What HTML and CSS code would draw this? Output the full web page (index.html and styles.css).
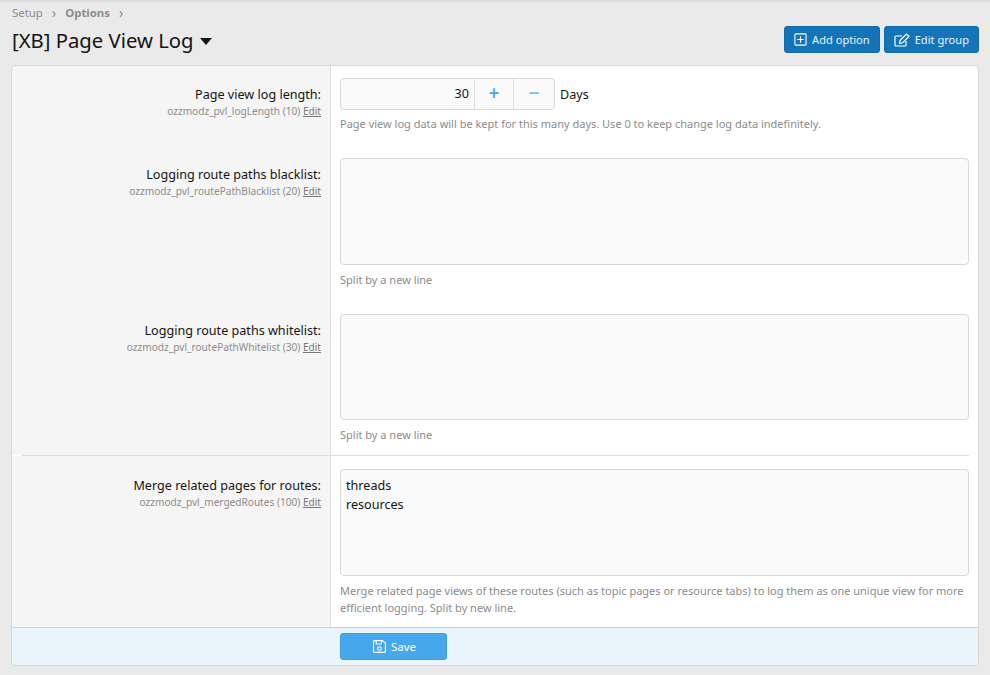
FILE: index.html
```html
<!DOCTYPE html>
<html lang="en">

<head>
    <meta charset="UTF-8">
    <title>[XB] Page View Log</title>
    <link rel="stylesheet" href="styles.css">
</head>

<body>
    <div class="crumbs">
        <span>Setup</span><span class="sep">&#8250;</span><b>Options</b><span class="sep">&#8250;</span>
    </div>

    <header class="head">
        <h1>[XB] Page View Log <span class="caret"></span></h1>
        <div class="head-btns">
            <a class="btn">
                <svg width="13" height="13" viewBox="0 0 14 14" fill="none" stroke="#fff" stroke-width="1.2">
                    <rect x="1" y="1" width="12" height="12" rx="1"/>
                    <path d="M7 3.5v7M3.5 7h7"/>
                </svg>
                Add option
            </a>
            <a class="btn">
                <svg width="16" height="14" viewBox="0 0 16 14" fill="none" stroke="#fff" stroke-width="1.2">
                    <path d="M12 8v4a1 1 0 0 1-1 1H2a1 1 0 0 1-1-1V4a1 1 0 0 1 1-1h6"/>
                    <path d="M6 7.5 12.5 1 15 3.2 8.6 9.8 5.6 10.4z"/>
                </svg>
                Edit group
            </a>
        </div>
    </header>

    <form class="card">
        <div class="row row-1">
            <div class="label">
                <div class="name">Page view log length:</div>
                <div class="hint">ozzmodz_pvl_logLength (10) <u>Edit</u></div>
            </div>
            <div class="field">
                <div class="spin-line">
                    <div class="spin">
                        <div class="spin-val">30</div>
                        <div class="spin-btn">+</div>
                        <div class="spin-btn spin-minus">&minus;</div>
                    </div>
                    <span>Days</span>
                </div>
                <p class="explain">Page view log data will be kept for this many days. Use 0 to keep change log data indefinitely.</p>
            </div>
        </div>

        <div class="row row-2">
            <div class="label">
                <div class="name">Logging route paths blacklist:</div>
                <div class="hint">ozzmodz_pvl_routePathBlacklist (20) <u>Edit</u></div>
            </div>
            <div class="field">
                <div class="area"></div>
                <p class="explain">Split by a new line</p>
            </div>
        </div>

        <div class="row row-3">
            <div class="label">
                <div class="name">Logging route paths whitelist:</div>
                <div class="hint">ozzmodz_pvl_routePathWhitelist (30) <u>Edit</u></div>
            </div>
            <div class="field">
                <div class="area"></div>
                <p class="explain">Split by a new line</p>
            </div>
        </div>

        <div class="row row-4">
            <div class="label">
                <div class="name">Merge related pages for routes:</div>
                <div class="hint">ozzmodz_pvl_mergedRoutes (100) <u>Edit</u></div>
            </div>
            <div class="field">
                <div class="area">threads<br>resources</div>
                <p class="explain">Merge related page views of these routes (such as topic pages or resource tabs) to log them as one unique view for more efficient logging. Split by new line.</p>
            </div>
        </div>

        <div class="foot">
            <button class="save" type="button">
                <svg width="13" height="13" viewBox="0 0 13 13" fill="none" stroke="#fff" stroke-width="1.1">
                    <path d="M1.5.6h8l2.9 2.6v8.2a1 1 0 0 1-1 1H1.5a1 1 0 0 1-1-1V1.6a1 1 0 0 1 1-1z"/>
                    <path d="M3.2.8v3.2h5.2V.8"/>
                    <circle cx="6.5" cy="8.6" r="1.9"/>
                </svg>
                Save
            </button>
        </div>
    </form>
</body>

</html>
```

FILE: styles.css
```css
* {
    box-sizing: border-box;
}

html,
body {
    height: 100%;
}

body {
    margin: 0;
    padding: 0 11px;
    background: #eaeaea;
    box-shadow: inset 0 4px 3px -3px #d4d4d4;
    font-family: "Noto Sans", "Open Sans", sans-serif;
    font-size: 12.6px;
    color: #141414;
    overflow: hidden;
}

.crumbs {
    height: 26px;
    padding: 5px 0 0 1px;
    font-size: 11.4px;
    line-height: 16px;
    color: #8c8c8c;
    display: flex;
}

.crumbs .sep {
    margin: 0 9px;
    font-size: 14px;
    line-height: 15px;
}

.head {
    height: 39px;
    padding-left: 1px;
    display: flex;
    justify-content: space-between;
    align-items: flex-start;
}

h1 {
    margin: 0;
    font-size: 20.3px;
    font-weight: 400;
    line-height: 28px;
}

.caret {
    display: inline-block;
    margin-left: 1px;
    vertical-align: 3px;
    border-top: 7px solid #141414;
    border-left: 6.5px solid transparent;
    border-right: 6.5px solid transparent;
}

.head-btns {
    display: flex;
    gap: 4px;
}

.btn {
    height: 27px;
    padding: 0 9px;
    display: flex;
    align-items: center;
    gap: 5px;
    background: #1474b8;
    border: 1px solid #126aa8;
    border-radius: 3px;
    color: #e8f4fc;
    font-size: 11.1px;
    white-space: nowrap;
}

.card {
    width: 968px;
    height: 601px;
    display: flex;
    flex-direction: column;
    background: linear-gradient(to right, #f5f5f5 318px, #e0e0e0 318px, #e0e0e0 319px, #fff 319px);
    border: 1px solid #d8d8d8;
    border-radius: 4px;
}

.row {
    display: flex;
    padding-top: 12px;
}

.row-1 {
    height: 80px;
}

.row-2 {
    height: 156px;
}

.row-3 {
    height: 153px;
}

.row-4 {
    height: 172px;
    position: relative;
    padding-top: 13px;
    border-top: 1px solid #dfdfdf;
    margin: 0 9px;
}

/* the rule stops short of the card edge */
.row-4::before {
    content: "";
    position: absolute;
    left: -9px;
    top: -1px;
    width: 9px;
    height: 1px;
    background: #fff;
}

.row-4 .label {
    width: 309px;
}

.label {
    width: 318px;
    padding: 0 9px 0 0;
    text-align: right;
}

.name {
    margin-top: 8px;
    line-height: 17px;
}

.hint {
    margin-top: 1px;
    font-size: 10.1px;
    line-height: 14px;
    color: #8c8c8c;
}

.hint u {
    color: #777;
}

.field {
    flex: 1;
    padding: 0 9px 0 10px;
}

.row-4 .field {
    padding-right: 0;
}

.spin-line {
    display: flex;
    align-items: center;
    gap: 5px;
}

.spin {
    width: 215px;
    height: 32px;
    display: flex;
    background: #fafafa;
    border: 1px solid #d8d8d8;
    border-radius: 4px;
}

.spin-val {
    flex: 1;
    padding-right: 5px;
    text-align: right;
    line-height: 30px;
}

.spin-btn {
    width: 39px;
    text-align: center;
    border-left: 1px solid #e0e0e0;
    color: #47a7eb;
    font-size: 19px;
    font-weight: 600;
    line-height: 28px;
}

.spin-minus {
    width: 41px;
    color: #7cc0f0;
}

.area {
    height: 107px;
    padding: 6px 5px;
    background: #fafafa;
    border: 1px solid #d8d8d8;
    border-radius: 4px;
    line-height: 19px;
}

.row-3 .area {
    height: 106px;
}

.explain {
    margin: 6px 0 0;
    font-size: 11px;
    line-height: 17px;
    color: #8c8c8c;
}

.row-1 .explain {
    margin-top: 5px;
}

.foot {
    flex: 1;
    padding: 5px 0 0 328px;
    background: #e9f5fb;
    border-top: 1px solid #d0d0d0;
    border-radius: 0 0 4px 4px;
}

.save {
    width: 107px;
    height: 27px;
    display: flex;
    align-items: center;
    justify-content: center;
    gap: 5px;
    padding: 0 0 0 2px;
    background: #47a7eb;
    border: 1px solid #3f9de0;
    border-radius: 3px;
    color: #fff;
    font-family: inherit;
    font-size: 11.5px;
}
```
